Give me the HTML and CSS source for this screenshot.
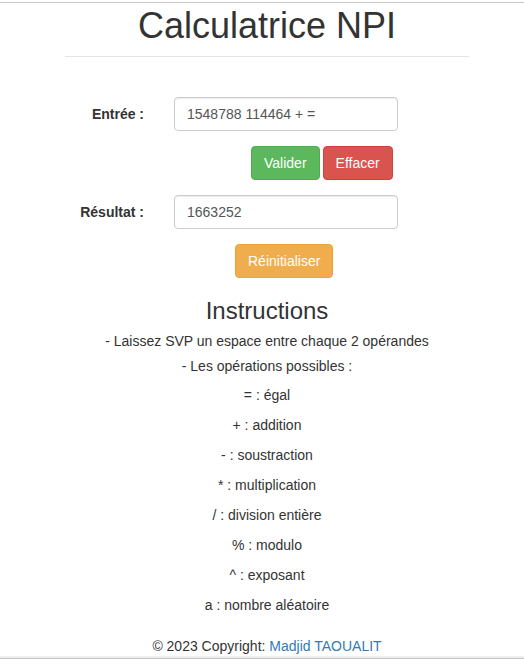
FILE: index.html
```html
<!DOCTYPE html>
<html lang="fr">
<head>
<meta charset="utf-8">
<title>Calculatrice NPI</title>
<link rel="stylesheet" href="styles.css">
</head>
<body>
<div class="topbar"></div>
<div class="page">
  <div class="page-header">
    <h1>Calculatrice NPI</h1>
  </div>
  <form class="calc-form">
    <div class="form-row">
      <label class="form-label" for="entree">Entrée :</label>
      <input class="form-input" id="entree" type="text" value="1548788 114464 + =">
    </div>
    <div class="btn-row">
      <button type="button" class="btn btn-success">Valider</button>
      <button type="button" class="btn btn-danger">Effacer</button>
    </div>
    <div class="form-row">
      <label class="form-label" for="resultat">Résultat :</label>
      <input class="form-input" id="resultat" type="text" value="1663252">
    </div>
    <div class="reset-row">
      <button type="button" class="btn btn-warning">Réinitialiser</button>
    </div>
  </form>
  <div class="instructions">
    <h3>Instructions</h3>
    <p class="intro">- Laissez SVP un espace entre chaque 2 opérandes</p>
    <p class="intro2">- Les opérations possibles :</p>
    <p>= : égal</p>
    <p>+ : addition</p>
    <p>- : soustraction</p>
    <p>* : multiplication</p>
    <p>/ : division entière</p>
    <p>% : modulo</p>
    <p>^ : exposant</p>
    <p>a : nombre aléatoire</p>
  </div>
  <footer class="footer">© 2023 Copyright: <a href="#">Madjid TAOUALIT</a></footer>
</div>
<div class="bottombar"></div>
</body>
</html>
```
FILE: styles.css
```css
* { box-sizing: border-box; }
html, body { margin: 0; padding: 0; background: #fff; }
body {
  font-family: "Liberation Sans", Arial, Helvetica, sans-serif;
  font-size: 14px;
  line-height: 20px;
  color: #333;
}
.topbar {
  height: 3px;
  border-bottom: 1px solid #c8c8c8;
}
.page {
  width: 404px;
  margin-left: 65px;
}
.page-header {
  margin-top: 3px;
  padding-bottom: 10px;
  border-bottom: 1px solid #e5e5e5;
}
.page-header h1 {
  margin: 0;
  font-size: 36px;
  font-weight: 500;
  line-height: 40px;
  text-align: center;
  color: #333;
}
.calc-form {
  margin-top: 40px;
  display: flex;
  flex-direction: column;
  gap: 15px;
}
.form-row {
  display: flex;
  align-items: center;
  height: 34px;
}
.form-label {
  width: 79px;
  text-align: right;
  font-weight: bold;
  margin-right: 30px;
}
.form-input {
  width: 224px;
  height: 34px;
  padding: 6px 12px;
  font-family: inherit;
  font-size: 14px;
  line-height: 20px;
  color: #555;
  background: #fff;
  border: 1px solid #ccc;
  border-radius: 4px;
  box-shadow: inset 0 1px 1px rgba(0,0,0,.075);
  outline: none;
}
.btn-row {
  display: flex;
  gap: 3px;
  padding-left: 186px;
}
.reset-row {
  display: flex;
  padding-left: 170px;
}
.btn {
  height: 34px;
  padding: 6px 12px;
  font-family: inherit;
  font-size: 14px;
  line-height: 20px;
  color: #fff;
  border: 1px solid transparent;
  border-radius: 4px;
  cursor: pointer;
}
.btn-success { background: #5cb85c; border-color: #4cae4c; }
.btn-danger { background: #d9534f; border-color: #d43f3a; }
.btn-warning { background: #f0ad4e; border-color: #eea236; }
.instructions {
  text-align: center;
}
.instructions h3 {
  margin: 20px 0 7px;
  font-size: 24px;
  font-weight: 500;
  line-height: 26px;
}
.instructions p {
  margin: 0 0 10px;
}
.instructions p.intro {
  margin-bottom: 5px;
}
.instructions p.intro2 {
  margin-bottom: 9px;
}
.footer {
  margin-top: 21px;
  height: 20px;
  text-align: center;
}
.footer a {
  color: #337ab7;
  text-decoration: none;
}
.bottombar {
  height: 3px;
  background: #eee;
  border-bottom: 1px solid #c4c4c4;
}
```
